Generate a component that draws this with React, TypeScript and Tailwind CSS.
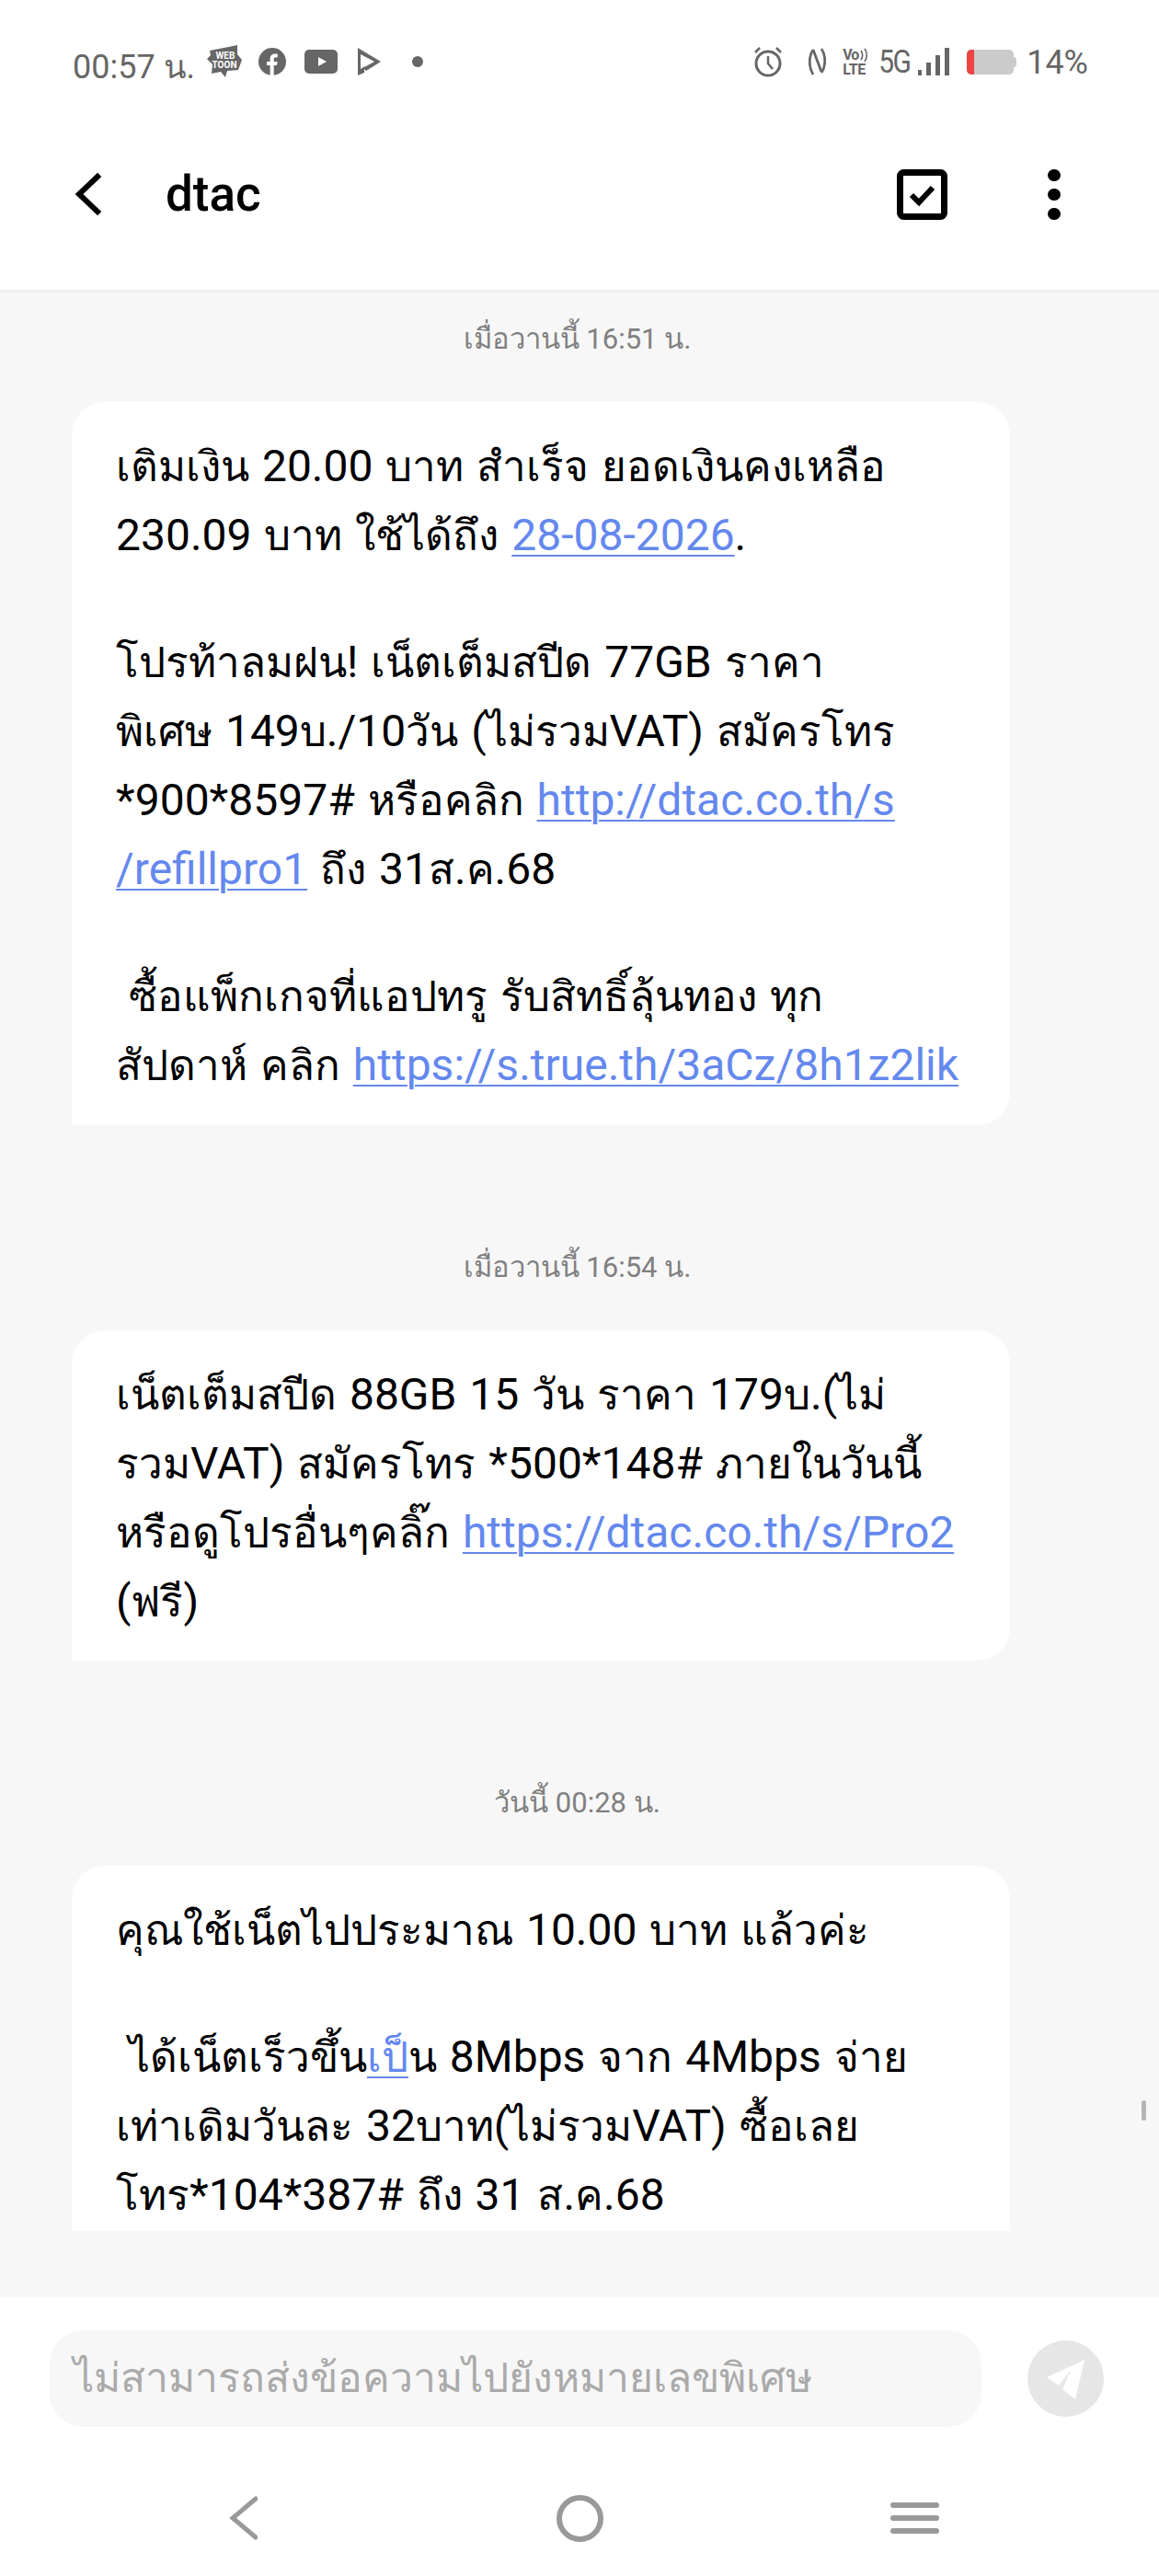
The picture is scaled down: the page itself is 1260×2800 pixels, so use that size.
import React from 'react';

// The Thai glyphs sit a little smaller than the Latin ones in the message text
const mixed = (text: string) =>
  text.split(/([\u0E00-\u0E7F]+)/).map((part, i) =>
    /[\u0E00-\u0E7F]/.test(part) ? (
      <span key={i} className="text-[45.8px]">{part}</span>
    ) : (
      part
    )
  );

const Link = ({ children }: { children: string }) => (
  <span className="text-[#6488ee] underline underline-offset-[5px] decoration-[2px]">{mixed(children)}</span>
);

const Line = ({ children }: { children?: React.ReactNode }) => (
  <div className="h-[75px] leading-[75px] whitespace-pre [word-spacing:2px]">
    {React.Children.map(children, (c) => (typeof c === 'string' ? mixed(c) : c))}
  </div>
);

const Gap = () => <div className="h-[63px]" />;

const Stamp = ({ children }: { children: React.ReactNode }) => (
  <div className="h-10 leading-10 w-[1260px] pr-[5px] pt-[2px] text-center text-[31px] text-[#808080]">{children}</div>
);

const Webtoon = () => (
  <svg width="38" height="36" viewBox="0 0 38 36">
    <path d="M3 6 L33 0 L33 10 L38 16 L34 27 L22 28 L20 35 L15 29 L5 31 L6 21 L0 15 L4 11 Z" fill="#666" />
    <text x="20" y="15" textAnchor="middle" fontSize="10" fontWeight="700" fill="#fff" fontFamily="Roboto">WEB</text>
    <text x="19" y="25" textAnchor="middle" fontSize="10" fontWeight="700" fill="#fff" fontFamily="Roboto">TOON</text>
  </svg>
);

const Facebook = () => (
  <svg width="30" height="30" viewBox="0 0 30 30">
    <circle cx="15" cy="15" r="15" fill="#666" />
    <path d="M12.6 30 V19 H9 V15 H12.6 V12 C12.6 8.3 14.8 6.5 18 6.5 C19.5 6.5 20.8 6.7 20.8 6.7 V10.2 H19 C17.2 10.2 16.7 11.2 16.7 12.4 V15 H20.6 L20 19 H16.7 V30 Z" fill="#fff" />
  </svg>
);

const Youtube = () => (
  <svg width="36" height="26" viewBox="0 0 36 26">
    <rect width="36" height="26" rx="5" fill="#666" />
    <path d="M15 8 L24 13 L15 18 Z" fill="#fff" />
  </svg>
);

const PlayStore = () => (
  <svg width="25" height="30" viewBox="0 0 25 30">
    <path d="M0 0 L25 15 L9 25 L7 23 L7 27 L0 30 Z M3 7 V23 L6 21 L9 20 L18 15 Z" fill="#666" fillRule="evenodd" />
  </svg>
);

const Alarm = () => (
  <svg width="32" height="34" viewBox="0 0 32 34" fill="none" stroke="#666" strokeWidth="3">
    <circle cx="16" cy="19" r="13" />
    <path d="M16 11 V19 L21 25" strokeWidth="2.5" />
    <path d="M2 7 L7 2 M30 7 L25 2" strokeWidth="2.5" />
  </svg>
);

const Nfc = () => (
  <svg width="19" height="32" viewBox="0 0 19 32" fill="none" stroke="#666" strokeWidth="2.8">
    <path d="M5 3 C0 10 0 22 5 30" />
    <path d="M5 3 L14 27" />
    <path d="M14 2 C19 9 19 21 14 28" />
  </svg>
);

const Volte = () => (
  <div className="w-[30px] h-[31px] text-[#666] font-bold whitespace-nowrap">
    <div className="flex items-center h-[16px] text-[16px] leading-[16px] tracking-[-1px]">
      Vo
      <svg className="ml-[2px]" width="9" height="16" viewBox="0 0 9 16" fill="none" stroke="#666" strokeWidth="1.6">
        <path d="M1 3 C3 6 3 10 1 13 M5 1 C8 5 8 11 5 15" />
      </svg>
    </div>
    <div className="h-[15px] text-[16px] leading-[15px] tracking-[-0.3px]">LTE</div>
  </div>
);

const Signal = () => (
  <div className="flex items-end gap-[5px] h-[30px]">
    <div className="w-[4px] h-[6px] bg-[#666]" />
    <div className="w-[5px] h-[14px] bg-[#666]" />
    <div className="w-[5px] h-[22px] bg-[#666]" />
    <div className="w-[5px] h-[30px] bg-[#666]" />
  </div>
);

const Battery = () => (
  <div className="flex items-center">
    <div className="w-[51px] h-[27px] rounded-[5px] bg-[#cbcbcb] overflow-hidden">
      <div className="w-[8px] h-full bg-[#ee4444]" />
    </div>
    <div className="w-[3px] h-[11px] rounded-r-[3px] bg-[#cbcbcb]" />
  </div>
);

const StatusBar = () => (
  <div className="h-[134px] flex items-center pl-[79px] pr-[77px] text-[#666]">
    <div className="text-[36px] leading-[40px] w-[146px] pt-[12px] whitespace-pre">00:57 น.</div>
    <Webtoon />
    <div className="ml-[18px]"><Facebook /></div>
    <div className="ml-[20px]"><Youtube /></div>
    <div className="ml-[22px]"><PlayStore /></div>
    <div className="ml-[34px] w-3 h-3 rounded-full bg-[#666]" />
    <div className="ml-auto flex items-center">
      <Alarm />
      <div className="ml-[28px]"><Nfc /></div>
      <div className="ml-[18px]"><Volte /></div>
      <div className="ml-[9px] w-[32px] text-[30px] leading-[34px] tracking-[-1.5px] scale-y-[1.15] whitespace-nowrap">5G</div>
      <div className="ml-[11px]"><Signal /></div>
      <div className="ml-[19px]"><Battery /></div>
      <div className="ml-[11px] text-[36px] leading-[40px] pt-[2px]">14%</div>
    </div>
  </div>
);

const Header = () => (
  <div className="h-[184px] pb-[27px] flex items-center border-b-[3px] border-[#f0f0f0]">
    <svg className="ml-[80px]" width="32" height="48" viewBox="0 0 32 48" fill="none" stroke="#000" strokeWidth="6" strokeLinecap="square">
      <path d="M26 5 L6 24 L26 43" />
    </svg>
    <div className="ml-[68px] text-[53px] font-medium text-black leading-none pt-[1px]">dtac</div>
    <svg className="ml-auto" width="55" height="55" viewBox="0 0 55 55" fill="none">
      <rect x="3.5" y="3.5" width="48" height="48" rx="4" stroke="#000" strokeWidth="7" />
      <path d="M16 28 L24 36 L39 20" stroke="#000" strokeWidth="6" />
    </svg>
    <div className="ml-[109px] mr-[107px] flex flex-col gap-[8px]">
      <div className="w-[14px] h-[13px] rounded-full bg-black" />
      <div className="w-[14px] h-[13px] rounded-full bg-black" />
      <div className="w-[14px] h-[13px] rounded-full bg-black" />
    </div>
  </div>
);

const Composer = () => (
  <div className="h-[303px] bg-white">
    <div className="pt-[36px] pl-[54px] flex items-center">
      <div className="w-[1013px] h-[105px] rounded-[36px] bg-[#f7f7f7] pl-[26px] flex items-center text-[44.4px] text-[#aaaaaa] whitespace-nowrap">
        ไม่สามารถส่งข้อความไปยังหมายเลขพิเศษ
      </div>
      <div className="ml-[50px] w-[83px] h-[83px] rounded-full bg-[#e6e6e6] flex items-center justify-center">
        <svg width="46" height="48" viewBox="0 0 46 48">
          <path d="M43 3 L2 22 L15 31 L28 14 L19 35 L33 46 Z" fill="#fff" />
        </svg>
      </div>
    </div>
    <div className="mt-[73px] flex items-center h-[52px]">
      <svg className="ml-[248px]" width="32" height="48" viewBox="0 0 32 48" fill="none" stroke="#999" strokeWidth="5" strokeLinecap="round">
        <path d="M30 3 L5 24 L30 45" />
      </svg>
      <div className="ml-[325px] w-[51px] h-[51px] rounded-full border-[6px] border-[#999]" />
      <div className="ml-[312px] flex flex-col gap-[8px]">
        <div className="w-[53px] h-[6px] rounded-[3px] bg-[#999]" />
        <div className="w-[53px] h-[6px] rounded-[3px] bg-[#999]" />
        <div className="w-[53px] h-[6px] rounded-[3px] bg-[#999]" />
      </div>
    </div>
  </div>
);

export default function App() {
  return (
    <div className="relative w-[1260px] h-[2800px] bg-white flex flex-col overflow-hidden font-['Roboto','Noto_Sans','Noto_Sans_CJK_SC',sans-serif]">
      <StatusBar />
      <Header />

      <div className="flex-1 bg-[#f7f7f7] pt-[29px] overflow-hidden">
        <Stamp>เมื่อวานนี้ 16:51 น.</Stamp>
        <div className="mt-[50px] ml-[78px] w-[1020px] h-[786px] pt-[32px] pl-[48px] rounded-[36px] rounded-bl-none bg-white text-[48px] text-black">
          <Line>เติมเงิน 20.00 บาท สำเร็จ ยอดเงินคงเหลือ</Line>
          <Line>230.09 บาท ใช้ได้ถึง <Link>28-08-2026</Link>.</Line>
          <Gap />
          <Line>โปรท้าลมฝน! เน็ตเต็มสปีด 77GB ราคา</Line>
          <Line>พิเศษ 149บ./10วัน (ไม่รวมVAT) สมัครโทร</Line>
          <Line>*900*8597# หรือคลิก <Link>http://dtac.co.th/s</Link></Line>
          <Line><Link>/refillpro1</Link> ถึง 31ส.ค.68</Line>
          <Gap />
          <Line> ซื้อแพ็กเกจที่แอปทรู รับสิทธิ์ลุ้นทอง ทุก</Line>
          <Line>สัปดาห์ คลิก <Link>https://s.true.th/3aCz/8h1z2lik</Link></Line>
        </div>

        <div className="mt-[133px]"><Stamp>เมื่อวานนี้ 16:54 น.</Stamp></div>
        <div className="mt-[50px] ml-[78px] w-[1020px] h-[359px] pt-[32px] pl-[48px] rounded-[36px] rounded-bl-none bg-white text-[48px] text-black">
          <Line>เน็ตเต็มสปีด 88GB 15 วัน ราคา 179บ.(ไม่</Line>
          <Line>รวมVAT) สมัครโทร *500*148# ภายในวันนี้</Line>
          <Line>หรือดูโปรอื่นๆคลิ๊ก <Link>https://dtac.co.th/s/Pro2</Link></Line>
          <Line>(ฟรี)</Line>
        </div>

        <div className="mt-[133px]"><Stamp>วันนี้ 00:28 น.</Stamp></div>
        <div className="mt-[50px] ml-[78px] w-[1020px] h-[397px] pt-[32px] pl-[48px] rounded-t-[36px] bg-white text-[48px] text-black overflow-hidden">
          <Line>คุณใช้เน็ตไปประมาณ 10.00 บาท แล้วค่ะ</Line>
          <Gap />
          <Line> ได้เน็ตเร็วขึ้น<Link>เป็</Link>น 8Mbps จาก 4Mbps จ่าย</Line>
          <Line>เท่าเดิมวันละ 32บาท(ไม่รวมVAT) ซื้อเลย</Line>
          <Line>โทร*104*387# ถึง 31 ส.ค.68</Line>
        </div>
      </div>

      <Composer />

      {/* scroll thumb */}
      <div className="absolute left-[1241px] top-[2283px] w-[5px] h-[22px] rounded-[3px] bg-[#b5b5b5]" />
    </div>
  );
}
